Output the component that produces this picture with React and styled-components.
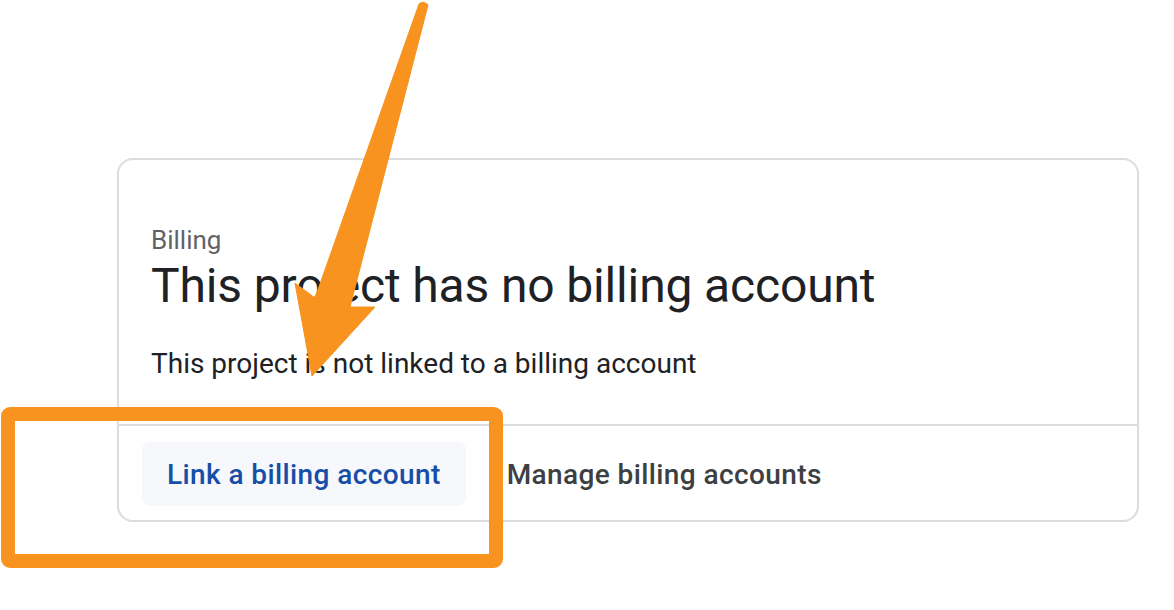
import React from 'react'
import styled, { createGlobalStyle } from 'styled-components'

const GlobalStyle = createGlobalStyle`
  html, body {
    margin: 0;
    padding: 0;
    background: #ffffff;
    font-family: Roboto, 'Noto Sans', Arial, sans-serif;
  }
`

const Page = styled.div`
  position: relative;
  width: 1174px;
  height: 610px;
  padding: 158px 0 0 117px;
  box-sizing: border-box;
  overflow: hidden;
`

const Card = styled.section`
  width: 1022px;
  height: 364px;
  box-sizing: border-box;
  border: 2px solid #dadce0;
  border-radius: 16px;
  display: flex;
  flex-direction: column;
`

const Body = styled.div`
  flex: 1;
  padding: 66px 32px 0;
  display: flex;
  flex-direction: column;
`

const Eyebrow = styled.div`
  font-size: 26px;
  line-height: 28px;
  color: #5f6368;
`

const Title = styled.h1`
  margin: 4px 0 0;
  font-size: 48px;
  font-weight: 400;
  line-height: 56px;
  letter-spacing: -0.15px;
  color: #202124;
`

const Lead = styled.p`
  margin: 32px 0 0;
  font-size: 28px;
  line-height: 36px;
  color: #202124;
`

const Footer = styled.div`
  border-top: 2px solid #dadce0;
  height: 96px;
  box-sizing: border-box;
  padding: 16px 23px;
  display: flex;
  align-items: flex-start;
  gap: 16px;
`

const Button = styled.button`
  height: 64px;
  padding: 0 25px;
  border: 0;
  border-radius: 8px;
  font-family: inherit;
  font-size: 28px;
  font-weight: 500;
  letter-spacing: 0.4px;
  background: ${p => (p.$tonal ? '#f6f8fc' : 'transparent')};
  color: ${p => (p.$tonal ? '#174ea6' : '#3c4043')};
`

const Overlay = styled.svg`
  position: absolute;
  left: 0;
  top: 0;
  pointer-events: none;
`

export default function App() {
  return (
    <Page>
      <GlobalStyle />
      <Card>
        <Body>
          <Eyebrow>Billing</Eyebrow>
          <Title>This project has no billing account</Title>
          <Lead>This project is not linked to a billing account</Lead>
        </Body>
        <Footer>
          <Button $tonal>Link a billing account</Button>
          <Button>Manage billing accounts</Button>
        </Footer>
      </Card>
      <Overlay width="1174" height="610" viewBox="0 0 1174 610">
        <rect x="8" y="414" width="488" height="147" rx="2" fill="none" stroke="#f7931e" strokeWidth="14" />
        <path
          d="M419 4 Q423 0 428 5 L350 307 L375 307 L312 376 L295 283 L315 298 Z"
          fill="#f7931e"
          stroke="#f7931e"
          strokeWidth="1"
          strokeLinejoin="round"
        />
      </Overlay>
    </Page>
  )
}
